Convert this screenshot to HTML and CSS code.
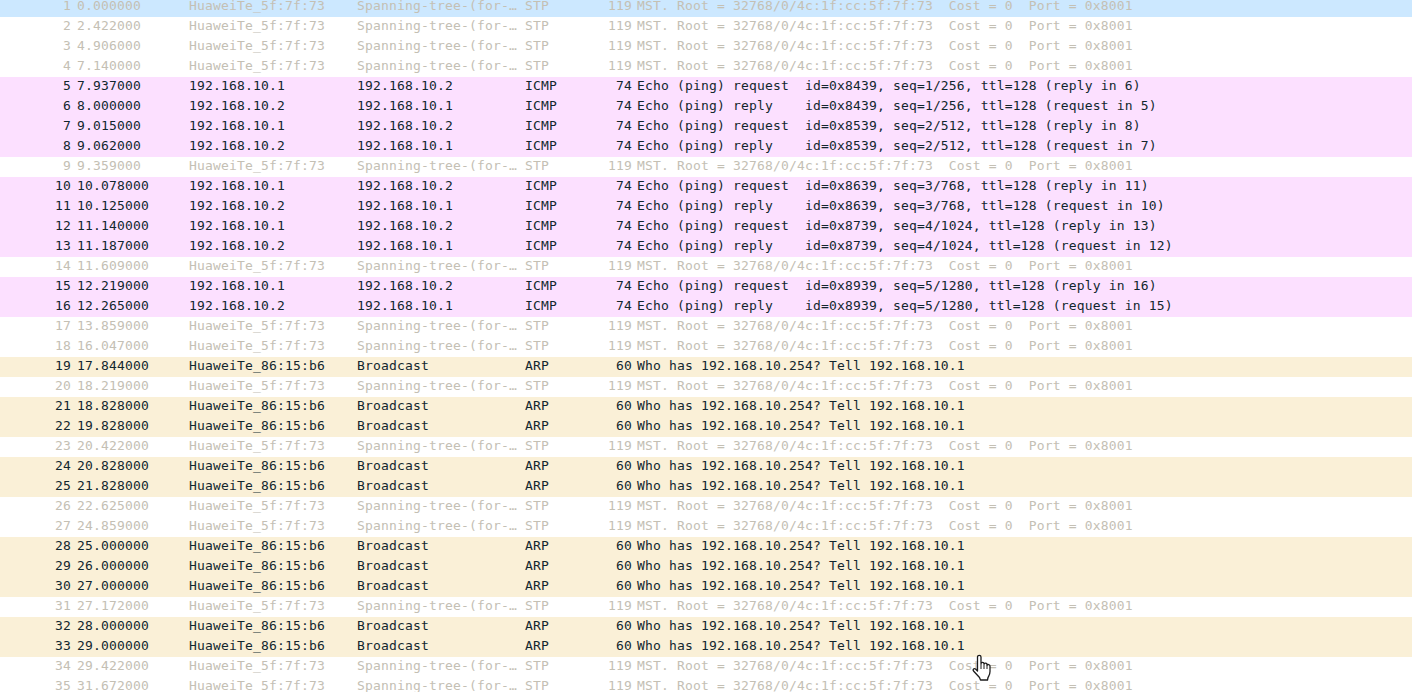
FILE: index.html
```html
<!DOCTYPE html>
<html lang="en">
<head>
<meta charset="utf-8">
<title>Packet list</title>
<link rel="stylesheet" href="styles.css">
</head>
<body>
<div class="list">
<div class="row stp sel"><span class="no">1</span><span class="time">0.000000</span><span>HuaweiTe_5f:7f:73</span><span>Spanning-tree-(for-…</span><span>STP</span><span class="len">119</span><span class="info">MST. Root = 32768/0/4c:1f:cc:5f:7f:73  Cost = 0  Port = 0x8001</span></div>
<div class="row stp"><span class="no">2</span><span class="time">2.422000</span><span>HuaweiTe_5f:7f:73</span><span>Spanning-tree-(for-…</span><span>STP</span><span class="len">119</span><span class="info">MST. Root = 32768/0/4c:1f:cc:5f:7f:73  Cost = 0  Port = 0x8001</span></div>
<div class="row stp"><span class="no">3</span><span class="time">4.906000</span><span>HuaweiTe_5f:7f:73</span><span>Spanning-tree-(for-…</span><span>STP</span><span class="len">119</span><span class="info">MST. Root = 32768/0/4c:1f:cc:5f:7f:73  Cost = 0  Port = 0x8001</span></div>
<div class="row stp"><span class="no">4</span><span class="time">7.140000</span><span>HuaweiTe_5f:7f:73</span><span>Spanning-tree-(for-…</span><span>STP</span><span class="len">119</span><span class="info">MST. Root = 32768/0/4c:1f:cc:5f:7f:73  Cost = 0  Port = 0x8001</span></div>
<div class="row icmp"><span class="no">5</span><span class="time">7.937000</span><span>192.168.10.1</span><span>192.168.10.2</span><span>ICMP</span><span class="len">74</span><span class="info">Echo (ping) request  id=0x8439, seq=1/256, ttl=128 (reply in 6)</span></div>
<div class="row icmp"><span class="no">6</span><span class="time">8.000000</span><span>192.168.10.2</span><span>192.168.10.1</span><span>ICMP</span><span class="len">74</span><span class="info">Echo (ping) reply    id=0x8439, seq=1/256, ttl=128 (request in 5)</span></div>
<div class="row icmp"><span class="no">7</span><span class="time">9.015000</span><span>192.168.10.1</span><span>192.168.10.2</span><span>ICMP</span><span class="len">74</span><span class="info">Echo (ping) request  id=0x8539, seq=2/512, ttl=128 (reply in 8)</span></div>
<div class="row icmp"><span class="no">8</span><span class="time">9.062000</span><span>192.168.10.2</span><span>192.168.10.1</span><span>ICMP</span><span class="len">74</span><span class="info">Echo (ping) reply    id=0x8539, seq=2/512, ttl=128 (request in 7)</span></div>
<div class="row stp"><span class="no">9</span><span class="time">9.359000</span><span>HuaweiTe_5f:7f:73</span><span>Spanning-tree-(for-…</span><span>STP</span><span class="len">119</span><span class="info">MST. Root = 32768/0/4c:1f:cc:5f:7f:73  Cost = 0  Port = 0x8001</span></div>
<div class="row icmp"><span class="no">10</span><span class="time">10.078000</span><span>192.168.10.1</span><span>192.168.10.2</span><span>ICMP</span><span class="len">74</span><span class="info">Echo (ping) request  id=0x8639, seq=3/768, ttl=128 (reply in 11)</span></div>
<div class="row icmp"><span class="no">11</span><span class="time">10.125000</span><span>192.168.10.2</span><span>192.168.10.1</span><span>ICMP</span><span class="len">74</span><span class="info">Echo (ping) reply    id=0x8639, seq=3/768, ttl=128 (request in 10)</span></div>
<div class="row icmp"><span class="no">12</span><span class="time">11.140000</span><span>192.168.10.1</span><span>192.168.10.2</span><span>ICMP</span><span class="len">74</span><span class="info">Echo (ping) request  id=0x8739, seq=4/1024, ttl=128 (reply in 13)</span></div>
<div class="row icmp"><span class="no">13</span><span class="time">11.187000</span><span>192.168.10.2</span><span>192.168.10.1</span><span>ICMP</span><span class="len">74</span><span class="info">Echo (ping) reply    id=0x8739, seq=4/1024, ttl=128 (request in 12)</span></div>
<div class="row stp"><span class="no">14</span><span class="time">11.609000</span><span>HuaweiTe_5f:7f:73</span><span>Spanning-tree-(for-…</span><span>STP</span><span class="len">119</span><span class="info">MST. Root = 32768/0/4c:1f:cc:5f:7f:73  Cost = 0  Port = 0x8001</span></div>
<div class="row icmp"><span class="no">15</span><span class="time">12.219000</span><span>192.168.10.1</span><span>192.168.10.2</span><span>ICMP</span><span class="len">74</span><span class="info">Echo (ping) request  id=0x8939, seq=5/1280, ttl=128 (reply in 16)</span></div>
<div class="row icmp"><span class="no">16</span><span class="time">12.265000</span><span>192.168.10.2</span><span>192.168.10.1</span><span>ICMP</span><span class="len">74</span><span class="info">Echo (ping) reply    id=0x8939, seq=5/1280, ttl=128 (request in 15)</span></div>
<div class="row stp"><span class="no">17</span><span class="time">13.859000</span><span>HuaweiTe_5f:7f:73</span><span>Spanning-tree-(for-…</span><span>STP</span><span class="len">119</span><span class="info">MST. Root = 32768/0/4c:1f:cc:5f:7f:73  Cost = 0  Port = 0x8001</span></div>
<div class="row stp"><span class="no">18</span><span class="time">16.047000</span><span>HuaweiTe_5f:7f:73</span><span>Spanning-tree-(for-…</span><span>STP</span><span class="len">119</span><span class="info">MST. Root = 32768/0/4c:1f:cc:5f:7f:73  Cost = 0  Port = 0x8001</span></div>
<div class="row arp"><span class="no">19</span><span class="time">17.844000</span><span>HuaweiTe_86:15:b6</span><span>Broadcast</span><span>ARP</span><span class="len">60</span><span class="info">Who has 192.168.10.254? Tell 192.168.10.1</span></div>
<div class="row stp"><span class="no">20</span><span class="time">18.219000</span><span>HuaweiTe_5f:7f:73</span><span>Spanning-tree-(for-…</span><span>STP</span><span class="len">119</span><span class="info">MST. Root = 32768/0/4c:1f:cc:5f:7f:73  Cost = 0  Port = 0x8001</span></div>
<div class="row arp"><span class="no">21</span><span class="time">18.828000</span><span>HuaweiTe_86:15:b6</span><span>Broadcast</span><span>ARP</span><span class="len">60</span><span class="info">Who has 192.168.10.254? Tell 192.168.10.1</span></div>
<div class="row arp"><span class="no">22</span><span class="time">19.828000</span><span>HuaweiTe_86:15:b6</span><span>Broadcast</span><span>ARP</span><span class="len">60</span><span class="info">Who has 192.168.10.254? Tell 192.168.10.1</span></div>
<div class="row stp"><span class="no">23</span><span class="time">20.422000</span><span>HuaweiTe_5f:7f:73</span><span>Spanning-tree-(for-…</span><span>STP</span><span class="len">119</span><span class="info">MST. Root = 32768/0/4c:1f:cc:5f:7f:73  Cost = 0  Port = 0x8001</span></div>
<div class="row arp"><span class="no">24</span><span class="time">20.828000</span><span>HuaweiTe_86:15:b6</span><span>Broadcast</span><span>ARP</span><span class="len">60</span><span class="info">Who has 192.168.10.254? Tell 192.168.10.1</span></div>
<div class="row arp"><span class="no">25</span><span class="time">21.828000</span><span>HuaweiTe_86:15:b6</span><span>Broadcast</span><span>ARP</span><span class="len">60</span><span class="info">Who has 192.168.10.254? Tell 192.168.10.1</span></div>
<div class="row stp"><span class="no">26</span><span class="time">22.625000</span><span>HuaweiTe_5f:7f:73</span><span>Spanning-tree-(for-…</span><span>STP</span><span class="len">119</span><span class="info">MST. Root = 32768/0/4c:1f:cc:5f:7f:73  Cost = 0  Port = 0x8001</span></div>
<div class="row stp"><span class="no">27</span><span class="time">24.859000</span><span>HuaweiTe_5f:7f:73</span><span>Spanning-tree-(for-…</span><span>STP</span><span class="len">119</span><span class="info">MST. Root = 32768/0/4c:1f:cc:5f:7f:73  Cost = 0  Port = 0x8001</span></div>
<div class="row arp"><span class="no">28</span><span class="time">25.000000</span><span>HuaweiTe_86:15:b6</span><span>Broadcast</span><span>ARP</span><span class="len">60</span><span class="info">Who has 192.168.10.254? Tell 192.168.10.1</span></div>
<div class="row arp"><span class="no">29</span><span class="time">26.000000</span><span>HuaweiTe_86:15:b6</span><span>Broadcast</span><span>ARP</span><span class="len">60</span><span class="info">Who has 192.168.10.254? Tell 192.168.10.1</span></div>
<div class="row arp"><span class="no">30</span><span class="time">27.000000</span><span>HuaweiTe_86:15:b6</span><span>Broadcast</span><span>ARP</span><span class="len">60</span><span class="info">Who has 192.168.10.254? Tell 192.168.10.1</span></div>
<div class="row stp"><span class="no">31</span><span class="time">27.172000</span><span>HuaweiTe_5f:7f:73</span><span>Spanning-tree-(for-…</span><span>STP</span><span class="len">119</span><span class="info">MST. Root = 32768/0/4c:1f:cc:5f:7f:73  Cost = 0  Port = 0x8001</span></div>
<div class="row arp"><span class="no">32</span><span class="time">28.000000</span><span>HuaweiTe_86:15:b6</span><span>Broadcast</span><span>ARP</span><span class="len">60</span><span class="info">Who has 192.168.10.254? Tell 192.168.10.1</span></div>
<div class="row arp"><span class="no">33</span><span class="time">29.000000</span><span>HuaweiTe_86:15:b6</span><span>Broadcast</span><span>ARP</span><span class="len">60</span><span class="info">Who has 192.168.10.254? Tell 192.168.10.1</span></div>
<div class="row stp"><span class="no">34</span><span class="time">29.422000</span><span>HuaweiTe_5f:7f:73</span><span>Spanning-tree-(for-…</span><span>STP</span><span class="len">119</span><span class="info">MST. Root = 32768/0/4c:1f:cc:5f:7f:73  Cost = 0  Port = 0x8001</span></div>
<div class="row stp"><span class="no">35</span><span class="time">31.672000</span><span>HuaweiTe_5f:7f:73</span><span>Spanning-tree-(for-…</span><span>STP</span><span class="len">119</span><span class="info">MST. Root = 32768/0/4c:1f:cc:5f:7f:73  Cost = 0  Port = 0x8001</span></div>
</div>
<svg class="cursor" width="20" height="27" viewBox="0 0 20 27"><path d="M5.500 3c0-2.200 3.500-2.200 3.500 0v6.500c.3-1.500 3-1.500 3 .2v.6c.3-1.500 3-1.500 3 .3v.7c.3-1.300 3-1 3 .8v5.400c0 3-1 4-2 6l-.5 2.500H8.500l-1-2.500L1.500 17c-1-1.500.5-3 2-2l2 2Z" fill="#fff" stroke="#1c1c1c" stroke-width="1.300" stroke-linejoin="round"/><path d="M9 10v5M12 11v4M15 11.500V15" stroke="#1c1c1c" fill="none"/></svg>
</body>
</html>
```
FILE: styles.css
```css
html, body { margin: 0; height: 692px; overflow: hidden; background: #fff; }
.list { margin-top: -3px; font: 13px/18px "DejaVu Sans Mono", "Liberation Mono", monospace; letter-spacing: .17px; }
.row { display: grid; grid-template-columns: 71px 118px 168px 168px 60px 47px 1fr; height: 20px; white-space: pre; color: #12272e; }
.no { text-align: right; }
.time { padding-left: 6px; }
.len { text-align: right; }
.info { padding-left: 5px; }
.stp { color: #c4c0b4; background: #fff; }
.icmp { background: #fce0ff; }
.arp { background: #faf0d7; }
.sel { background: #cce8ff; }
.cursor { position: absolute; left: 972px; top: 654px; }
```
